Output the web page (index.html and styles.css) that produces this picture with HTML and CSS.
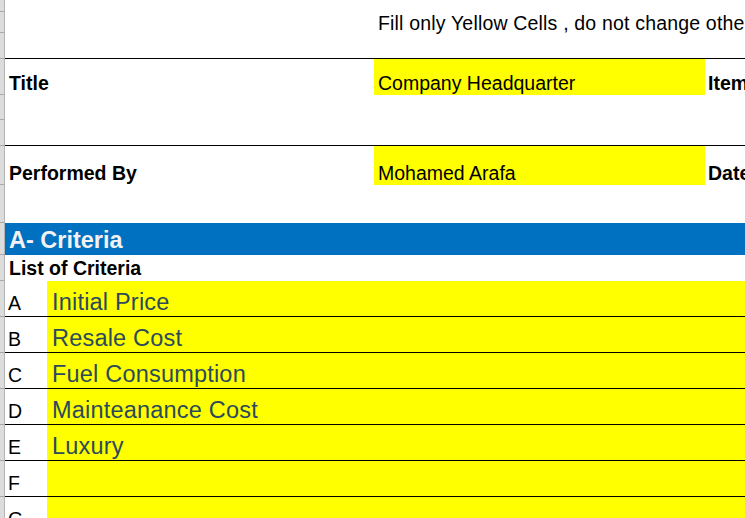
FILE: index.html
```html
<!DOCTYPE html>
<html>
<head>
<meta charset="utf-8">
<link rel="stylesheet" href="styles.css">
</head>
<body>
<div class="sheet">
  <div class="row h12"><div class="gut"></div><div class="cells"></div></div>
  <div class="row h21"><div class="gut"></div><div class="cells note"><div class="c span2"></div><div class="c ycol plain">Fill only Yellow Cells , do not change other</div></div></div>
  <div class="row h26 lined"><div class="gut"></div><div class="cells"></div></div>
  <div class="row h36"><div class="gut"></div><div class="cells"><div class="c span2 lbl">Title</div><div class="c ycol yellow val">Company Headquarter</div><div class="c rest lbl">Item</div></div></div>
  <div class="row h25"><div class="gut"></div><div class="cells"></div></div>
  <div class="row h26 lined"><div class="gut"></div><div class="cells"></div></div>
  <div class="row h39"><div class="gut"></div><div class="cells"><div class="c span2 lbl">Performed By</div><div class="c ycol yellow val">Mohamed Arafa</div><div class="c rest lbl">Date</div></div></div>
  <div class="row h38"><div class="gut"></div><div class="cells"></div></div>
  <div class="row h32"><div class="gut"></div><div class="cells section"><div class="c full">A- Criteria</div></div></div>
  <div class="row h26"><div class="gut"></div><div class="cells"><div class="c full sub">List of Criteria</div></div></div>
  <div class="row crit"><div class="gut"></div><div class="cells"><div class="c key">A</div><div class="c item">Initial Price</div></div></div>
  <div class="row crit"><div class="gut"></div><div class="cells"><div class="c key">B</div><div class="c item">Resale Cost</div></div></div>
  <div class="row crit"><div class="gut"></div><div class="cells"><div class="c key">C</div><div class="c item">Fuel Consumption</div></div></div>
  <div class="row crit"><div class="gut"></div><div class="cells"><div class="c key">D</div><div class="c item">Mainteanance Cost</div></div></div>
  <div class="row crit"><div class="gut"></div><div class="cells"><div class="c key">E</div><div class="c item">Luxury</div></div></div>
  <div class="row crit"><div class="gut"></div><div class="cells"><div class="c key">F</div><div class="c item"></div></div></div>
  <div class="row crit"><div class="gut"></div><div class="cells"><div class="c key">G</div><div class="c item"></div></div></div>
</div>
</body>
</html>
```

FILE: styles.css
```css
html, body {
  margin: 0;
  padding: 0;
  background: #ffffff;
  overflow: hidden;
}
body {
  width: 745px;
  height: 518px;
  font-family: "Liberation Sans", Arial, sans-serif;
  color: #000;
}
.sheet {
  display: flex;
  flex-direction: column;
  width: 745px;
}
.row {
  display: flex;
  flex: none;
  box-sizing: border-box;
}
.gut {
  flex: none;
  width: 5px;
  background: #dcdcdc;
  border-right: 1px solid #b4b4b4;
  border-bottom: 1px solid #a8a8a8;
  box-sizing: border-box;
}
.cells {
  flex: 1;
  display: grid;
  grid-template-columns: 42px 327px 331px 1fr;
  box-sizing: border-box;
  min-width: 0;
  white-space: nowrap;
}
.row.lined .cells, .row.crit .cells {
  border-bottom: 1px solid #000;
}
.h12 { height: 12px; }
.h21 { height: 21px; }
.h25 { height: 25px; }
.h26 { height: 26px; }
.h32 { height: 32px; }
.h36 { height: 36px; }
.h38 { height: 38px; }
.h39 { height: 39px; }
.crit { height: 36px; }

.c {
  display: flex;
  align-items: flex-end;
  min-width: 0;
  overflow: visible;
}
.span2 { grid-column: 1 / 3; padding-left: 4px; }
.ycol { grid-column: 3; padding-left: 4px; }
.rest { grid-column: 4; padding-left: 3px; }
.full { grid-column: 1 / 5; padding-left: 4px; }

.plain {
  font-size: 19.5px;
  line-height: 19.5px;
  letter-spacing: 0.18px;
}
.lbl {
  font-size: 19.5px;
  font-weight: bold;
  line-height: 23.5px;
}
.val {
  font-size: 19.5px;
  line-height: 23.5px;
}
.yellow { background: #ffff00; }

.section {
  background: #0070c0;
}
.section .c {
  color: #f2f2f2;
  font-weight: bold;
  font-size: 23.5px;
  line-height: 30px;
}
.sub {
  font-weight: bold;
  font-size: 19.5px;
  line-height: 25.5px;
}
.key {
  grid-column: 1;
  padding-left: 3px;
  font-size: 19.5px;
  line-height: 25.5px;
}
.item {
  grid-column: 2 / 5;
  background: #ffff00;
  padding-left: 5px;
  color: #2b4a5c;
  font-size: 23.5px;
  line-height: 28px;
  letter-spacing: 0.2px;
}
```
